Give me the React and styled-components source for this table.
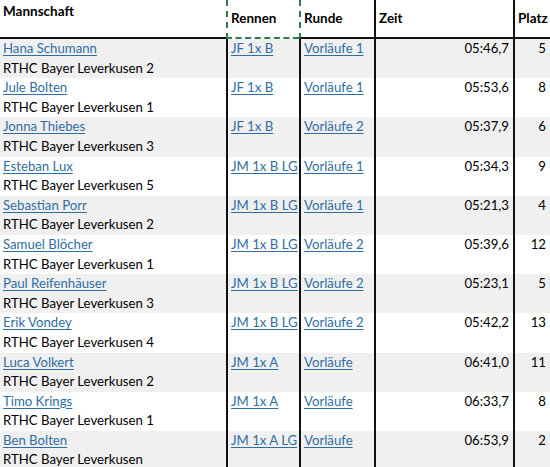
import React from 'react';
import styled, { createGlobalStyle } from 'styled-components';

const rows = [
  { name: 'Hana Schumann', club: 'RTHC Bayer Leverkusen 2', race: 'JF 1x B', round: 'Vorläufe 1', time: '05:46,7', place: 5 },
  { name: 'Jule Bolten', club: 'RTHC Bayer Leverkusen 1', race: 'JF 1x B', round: 'Vorläufe 1', time: '05:53,6', place: 8 },
  { name: 'Jonna Thiebes', club: 'RTHC Bayer Leverkusen 3', race: 'JF 1x B', round: 'Vorläufe 2', time: '05:37,9', place: 6 },
  { name: 'Esteban Lux', club: 'RTHC Bayer Leverkusen 5', race: 'JM 1x B LG', round: 'Vorläufe 1', time: '05:34,3', place: 9 },
  { name: 'Sebastian Porr', club: 'RTHC Bayer Leverkusen 2', race: 'JM 1x B LG', round: 'Vorläufe 1', time: '05:21,3', place: 4 },
  { name: 'Samuel Blöcher', club: 'RTHC Bayer Leverkusen 1', race: 'JM 1x B LG', round: 'Vorläufe 2', time: '05:39,6', place: 12 },
  { name: 'Paul Reifenhäuser', club: 'RTHC Bayer Leverkusen 3', race: 'JM 1x B LG', round: 'Vorläufe 2', time: '05:23,1', place: 5 },
  { name: 'Erik Vondey', club: 'RTHC Bayer Leverkusen 4', race: 'JM 1x B LG', round: 'Vorläufe 2', time: '05:42,2', place: 13 },
  { name: 'Luca Volkert', club: 'RTHC Bayer Leverkusen 2', race: 'JM 1x A', round: 'Vorläufe', time: '06:41,0', place: 11 },
  { name: 'Timo Krings', club: 'RTHC Bayer Leverkusen 1', race: 'JM 1x A', round: 'Vorläufe', time: '06:33,7', place: 8 },
  { name: 'Ben Bolten', club: 'RTHC Bayer Leverkusen', race: 'JM 1x A LG', round: 'Vorläufe', time: '06:53,9', place: 2 },
];

function App() {
  return (
    <>
      <GlobalStyle />
      <Sheet>
        <HeadRow>
          <HeadCell $top>Mannschaft</HeadCell>
          <HeadCell $marquee>Rennen</HeadCell>
          <HeadCell $marqueeLeft>Runde</HeadCell>
          <HeadCell $line>Zeit</HeadCell>
          <HeadCell $line>Platz</HeadCell>
        </HeadRow>
        {rows.map((r, i) => (
          <Row key={r.name} $shade={i % 2 === 0}>
            <Cell>
              <Link>{r.name}</Link>
              <Club>{r.club}</Club>
            </Cell>
            <Cell $line>
              <Link>{r.race}</Link>
            </Cell>
            <Cell $line>
              <Link>{r.round}</Link>
            </Cell>
            <Cell $line $right>
              {r.time}
            </Cell>
            <Cell $line $right>
              {r.place}
            </Cell>
          </Row>
        ))}
      </Sheet>
    </>
  );
}

export default App;

const GlobalStyle = createGlobalStyle`
  body {
    margin: 0;
    background: #ffffff;
    font-family: Lato, "Open Sans", sans-serif;
    overflow: hidden;
  }
`;

const Sheet = styled.div`
  width: 550px;
  height: 467px;
  overflow: hidden;
  color: #000000;
  font-size: 13.2px;
`;

const HeadRow = styled.div`
  display: grid;
  grid-template-columns: 226px 73px 75px 139px 37px;
  height: 39px;
`;

const HeadCell = styled.div`
  font-weight: 700;
  font-size: 13.5px;
  padding: ${p => (p.$top ? '3px' : '10px')} 3px 0 3px;
  border-bottom: 2px ${p => (p.$marquee ? 'dashed #2f7a4f' : 'solid #111')};
  border-left: ${p =>
    p.$marquee || p.$marqueeLeft
      ? '2px dashed #2f7a4f'
      : p.$line
      ? '2px solid #111'
      : 'none'};
  white-space: nowrap;
`;

const Row = styled.div`
  display: grid;
  grid-template-columns: 226px 73px 75px 139px 37px;
  height: 39.2px;
  background: ${p => (p.$shade ? '#f0f0f0' : '#ffffff')};
`;

const Cell = styled.div`
  line-height: 19.6px;
  padding: 0 ${p => (p.$right ? '4px' : '0')} 0 3px;
  border-left: ${p => (p.$line ? '2px solid #111' : 'none')};
  text-align: ${p => (p.$right ? 'right' : 'left')};
  white-space: nowrap;
`;

const Link = styled.div`
  color: #2f6ea5;
  text-decoration: underline;
  text-underline-offset: 2px;
`;

const Club = styled.div`
  color: #000000;
`;
